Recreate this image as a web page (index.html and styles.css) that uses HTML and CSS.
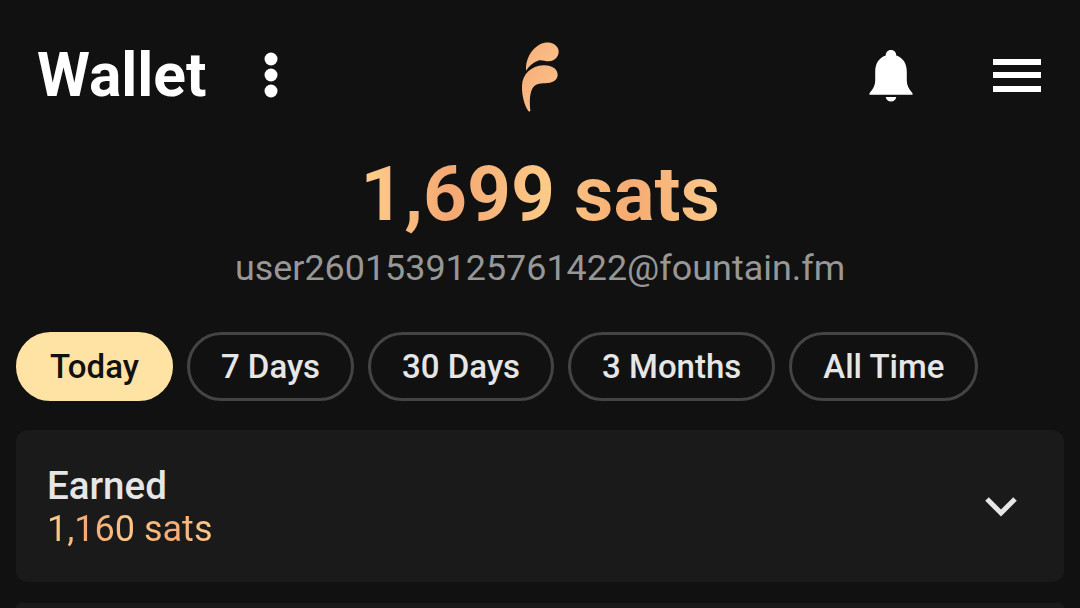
FILE: index.html
```html
<!DOCTYPE html>
<html lang="en">
<head>
  <meta charset="utf-8">
  <title>Wallet</title>
  <link rel="stylesheet" href="styles.css">
</head>
<body>

<div id="wrapper">
  <div id="header">
    <div class="headerLeft">
      <div id="title">Wallet</div>
      <svg class="dots" width="14" height="46" viewBox="0 0 14 46">
        <circle cx="7" cy="7" r="6.5" fill="#fff"/>
        <circle cx="7" cy="23" r="6.5" fill="#fff"/>
        <circle cx="7" cy="39" r="6.5" fill="#fff"/>
      </svg>
    </div>
    <svg class="logo" width="100" height="90" viewBox="0 0 300 270">
      <defs>
        <linearGradient id="logoFill" x1="0" y1="0" x2="1" y2="1">
          <stop offset="0" stop-color="#f7ae78"/>
          <stop offset="1" stop-color="#fcc48e"/>
        </linearGradient>
      </defs>
      <path fill="url(#logoFill)" d="M108 122 C106 90 122 58 150 43 C172 32 198 38 205 58 C210 76 196 94 176 94 C164 94 154 88 144 92 C130 97 118 106 108 122 Z"/>
      <path fill="url(#logoFill)" d="M115 243 C103 226 95 195 96 168 C97 132 124 108 160 106 C186 105 204 118 203 136 C202 152 186 160 166 160 C148 160 134 162 126 178 C118 196 119 222 121 240 C121 245 118 246 115 243 Z"/>
    </svg>
    <div class="headerRight">
      <svg class="bell" width="44" height="53" viewBox="0 0 46 54" preserveAspectRatio="none">
        <path fill="#fff" d="M23 1 C26.500 1 28.500 3.500 28.500 6.500 C36 9 39.500 15 39.500 23 L39.500 32 C39.500 37 41.500 40 45.500 45 L45.500 46.500 L0.500 46.500 L0.500 45 C4.500 40 6.500 37 6.500 32 L6.500 23 C6.500 15 10 9 17.500 6.500 C17.500 3.500 19.500 1 23 1 Z"/>
        <path fill="#fff" d="M17.500 49 L28.500 49 C28 52 26 53.500 23 53.500 C20 53.500 18 52 17.500 49 Z"/>
      </svg>
      <div class="menu">
        <span></span>
        <span></span>
        <span></span>
      </div>
    </div>
  </div>

  <div id="balance">
    <div id="amount"><span class="goldText">1,699 sats</span></div>
    <div id="address">user2601539125761422@fountain.fm</div>
  </div>

  <div id="ranges">
    <button class="chip active">Today</button>
    <button class="chip">7 Days</button>
    <button class="chip">30 Days</button>
    <button class="chip">3 Months</button>
    <button class="chip">All Time</button>
  </div>

  <div class="card">
    <div class="cardText">
      <div class="cardTitle">Earned</div>
      <div class="cardValue"><span class="goldText">1,160 sats</span></div>
    </div>
    <svg class="chevron" width="34" height="22" viewBox="0 0 34 22">
      <path d="M3 4 L17 18 L31 4" fill="none" stroke="#e6e6e6" stroke-width="5"/>
    </svg>
  </div>
  <div class="card"></div>
</div>

</body>
</html>
```

FILE: styles.css
```css
html, body {
  height: 100%;
  margin: 0;
  overflow: hidden;
  background-color: #111111;
  font-family: Roboto, "Liberation Sans", sans-serif;
}

#wrapper {
  display: flex;
  flex-direction: column;
  height: 100%;
  padding: 0 16px;
  box-sizing: border-box;
}

#header {
  display: grid;
  grid-template-columns: 1fr auto 1fr;
  align-items: center;
  height: 150px;
  flex-shrink: 0;
}

.headerLeft {
  display: flex;
  align-items: center;
  padding-left: 21px;
  gap: 57px;
}

.headerRight {
  display: flex;
  align-items: center;
  justify-content: flex-end;
  gap: 80px;
  padding-right: 23px;
}

#title {
  font-size: 60.5px;
  font-weight: 700;
  color: #ffffff;
}

.menu {
  display: flex;
  flex-direction: column;
  gap: 7.5px;
  width: 48px;
}

.menu span {
  display: block;
  height: 6px;
  background-color: #ffffff;
}

#balance {
  text-align: center;
  flex-shrink: 0;
}

#amount {
  font-size: 76.7px;
  font-weight: 700;
  line-height: 88px;
}

#address {
  font-size: 35.9px;
  line-height: 40px;
  color: #979797;
  margin-top: 10px;
}

.goldText {
  background-image: linear-gradient(90deg, #fdd08c 0%, #f4a873 25%, #fcca88 52%, #f5ab72 75%, #fbc98c 100%);
  -webkit-background-clip: text;
  background-clip: text;
  color: transparent;
}

#ranges {
  display: flex;
  gap: 14px;
  margin-top: 44px;
  flex-shrink: 0;
}

.chip {
  height: 69px;
  padding: 0 31px;
  box-sizing: border-box;
  border: 3px solid #444444;
  border-radius: 35px;
  background-color: transparent;
  color: #e6e6e6;
  font-family: inherit;
  font-size: 33px;
  font-weight: 500;
}

.active {
  background-color: #fee3a4;
  border-color: #fee3a4;
  color: #111111;
}

.card {
  display: flex;
  justify-content: space-between;
  align-items: center;
  height: 152px;
  margin-bottom: 21px;
  padding: 0 46px 0 31px;
  box-sizing: border-box;
  flex-shrink: 0;
  border-radius: 12px;
  background-color: #1a1a1a;
}

/* only the top of the next card shows */
.card:last-child {
  flex: 1;
  height: auto;
  min-height: 0;
  margin-bottom: 0;
  border-radius: 12px 12px 0 0;
}

#ranges + .card {
  margin-top: 29px;
}

.cardText {
  margin-top: 4px;
}

.cardTitle {
  font-size: 38.5px;
  font-weight: 500;
  line-height: 42px;
  color: #e6e6e6;
}

.cardValue {
  font-size: 36px;
  line-height: 44px;
}
```
